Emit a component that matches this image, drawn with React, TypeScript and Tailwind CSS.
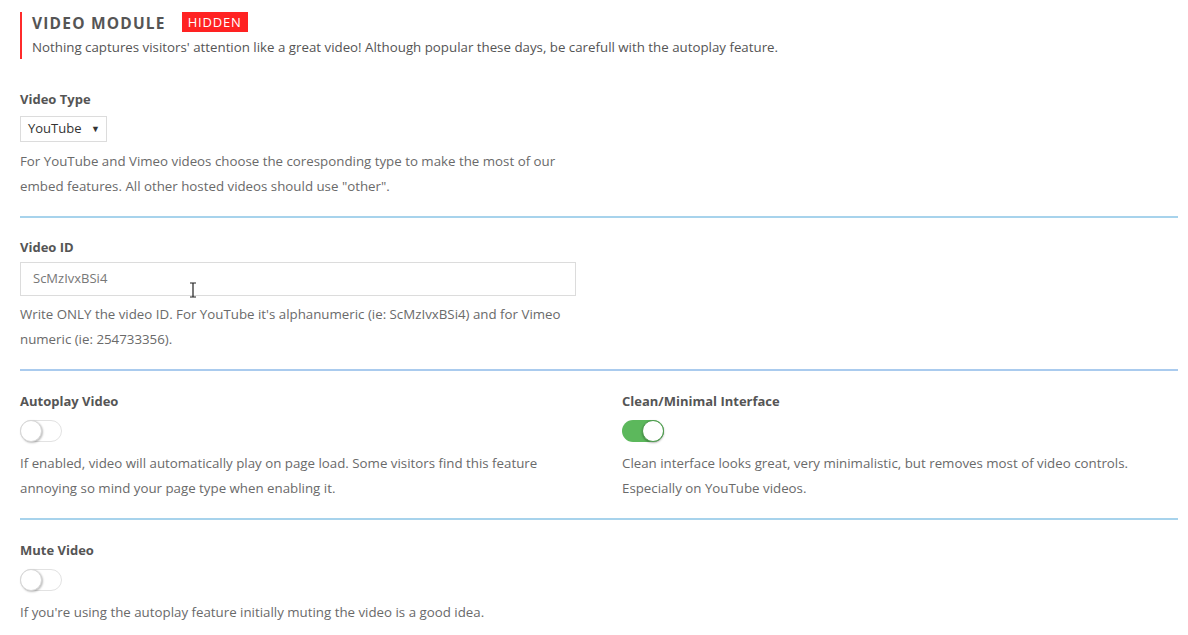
import React from 'react';

function Toggle({ on }: { on: boolean }) {
  if (on) {
    return (
      <div className="relative h-[22px] w-[42px] rounded-full bg-[#5cb85c]">
        <div className="absolute right-0 top-0 h-[22px] w-[22px] rounded-full border border-[#4a9a4a] bg-white shadow-[0_1px_2px_rgba(0,0,0,0.3)]" />
      </div>
    );
  }
  return (
    <div className="relative h-[22px] w-[42px] rounded-full border border-[#e2e2e2] bg-white">
      <div className="absolute -left-px -top-px h-[22px] w-[22px] rounded-full border border-[#d6d6d6] bg-white shadow-[1px_1px_2px_rgba(0,0,0,0.25)]" />
    </div>
  );
}

function Label({ children }: { children: React.ReactNode }) {
  return <div className="text-[13px] font-bold leading-[20px] text-[#555]">{children}</div>;
}

function Desc({ children, className = '' }: { children: React.ReactNode; className?: string }) {
  return <p className={`text-[13.3px] leading-[25px] text-[#6a6a6a] ${className}`}>{children}</p>;
}

function Divider({ color = 'bg-[#a7d3ec]' }: { color?: string }) {
  return <div className={`mt-[17px] h-[2px] w-full ${color}`} />;
}

export default function App() {
  return (
    <div className="min-h-screen bg-white pl-[20px] pr-[10px] pt-[12px]" style={{ fontFamily: '"Open Sans", "Liberation Sans", sans-serif' }}>
      {/* module header */}
      <div className="border-l-2 border-[#ff2b2b] pl-[10px]">
        <div className="flex h-[20px] items-center">
          <h1 className="pt-[3px] text-[15.5px] font-bold tracking-[1.2px] text-[#555]">VIDEO MODULE</h1>
          <span className="ml-[16px] flex h-[20px] items-center bg-[#ff2222] px-[6px] pt-[1px] text-[13px] tracking-[0.8px] text-white">HIDDEN</span>
        </div>
        <p className="mt-[3px] text-[13.3px] leading-[24px] text-[#555]">
          Nothing captures visitors' attention like a great video! Although popular these days, be carefull with the autoplay feature.
        </p>
      </div>

      {/* video type */}
      <div className="mt-[30px]">
        <Label>Video Type</Label>
        <div className="mt-[7px] flex h-[26px] w-[87px] items-center justify-between border border-[#dcdcdc] pl-[7px] pr-[6px] text-[13px] text-[#333]">
          <span>YouTube</span>
          <span className="text-[9px]">▼</span>
        </div>
        <Desc className="mt-[7px]">
          For YouTube and Vimeo videos choose the coresponding type to make the most of our
          <br />
          embed features. All other hosted videos should use "other".
        </Desc>
      </div>
      <Divider />

      {/* video id */}
      <div className="mt-[19px]">
        <Label>Video ID</Label>
        <div className="relative mt-[5px] flex h-[34px] w-[556px] items-center border border-[#dcdcdc] pl-[12px] text-[13px] text-[#777]">
          ScMzIvxBSi4
          <svg className="absolute left-[167px] top-[19px]" width="10" height="16" viewBox="0 0 10 16">
            <path d="M2 1h6M5 1v14M2 15h6" stroke="#222" strokeWidth="1.2" fill="none" />
          </svg>
        </div>
        <Desc className="mt-[6px]">
          Write ONLY the video ID. For YouTube it's alphanumeric (ie: ScMzIvxBSi4) and for Vimeo
          <br />
          numeric (ie: 254733356).
        </Desc>
      </div>
      <Divider color="bg-[#aacbee]" />

      {/* autoplay + clean interface */}
      <div className="mt-[20px] grid grid-cols-[602px_1fr]">
        <div>
          <Label>Autoplay Video</Label>
          <div className="mt-[9px]">
            <Toggle on={false} />
          </div>
          <Desc className="mt-[9px]">
            If enabled, video will automatically play on page load. Some visitors find this feature
            <br />
            annoying so mind your page type when enabling it.
          </Desc>
        </div>
        <div>
          <Label>Clean/Minimal Interface</Label>
          <div className="mt-[9px]">
            <Toggle on={true} />
          </div>
          <Desc className="mt-[9px]">
            Clean interface looks great, very minimalistic, but removes most of video controls.
            <br />
            Especially on YouTube videos.
          </Desc>
        </div>
      </div>
      <Divider />

      {/* mute */}
      <div className="mt-[20px]">
        <Label>Mute Video</Label>
        <div className="mt-[9px]">
          <Toggle on={false} />
        </div>
        <Desc className="mt-[9px]">If you're using the autoplay feature initially muting the video is a good idea.</Desc>
      </div>
    </div>
  );
}
